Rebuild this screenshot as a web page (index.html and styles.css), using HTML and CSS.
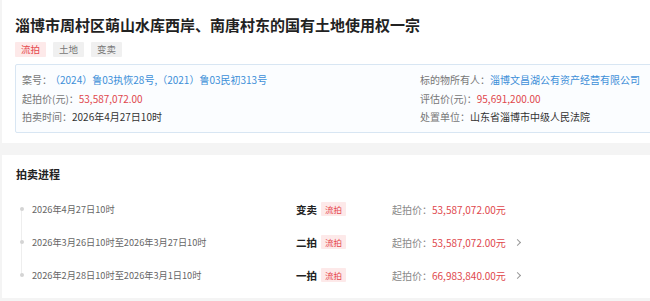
FILE: index.html
```html
<!DOCTYPE html>
<html lang="zh-CN">
<head>
	<meta charset="utf-8">
	<title>拍卖详情</title>
	<link rel="stylesheet" href="styles.css">
</head>
<body>
	<div class="card head-card">
		<h1 class="title">淄博市周村区萌山水库西岸、南唐村东的国有土地使用权一宗</h1>
		<div class="tags">
			<span class="tag tag-red">流拍</span>
			<span class="tag">土地</span>
			<span class="tag">变卖</span>
		</div>
		<div class="info">
			<div class="info-row"><span class="label">案号：</span><span class="link case-no">（2024）鲁03执恢28号,（2021）鲁03民初313号</span></div>
			<div class="info-row"><span class="label">标的物所有人：</span><span class="link">淄博文昌湖公有资产经营有限公司</span></div>
			<div class="info-row"><span class="label">起拍价(元)：</span><span class="price">53,587,072.00</span></div>
			<div class="info-row"><span class="label">评估价(元)：</span><span class="price">95,691,200.00</span></div>
			<div class="info-row"><span class="label">拍卖时间：</span><span class="value">2026年4月27日10时</span></div>
			<div class="info-row"><span class="label">处置单位：</span><span class="value">山东省淄博市中级人民法院</span></div>
		</div>
	</div>

	<div class="card progress-card">
		<h2 class="sub-title">拍卖进程</h2>
		<ul class="timeline">
			<li class="step">
				<span class="dot"></span>
				<span class="date">2026年4月27日10时</span>
				<span class="stage">变卖<span class="mini-tag">流拍</span></span>
				<span class="start">起拍价：<em>53,587,072.00元</em></span>
			</li>
			<li class="step">
				<span class="dot"></span>
				<span class="date">2026年3月26日10时至2026年3月27日10时</span>
				<span class="stage">二拍<span class="mini-tag">流拍</span></span>
				<span class="start">起拍价：<em>53,587,072.00元</em><i class="arrow"></i></span>
			</li>
			<li class="step">
				<span class="dot"></span>
				<span class="date">2026年2月28日10时至2026年3月1日10时</span>
				<span class="stage">一拍<span class="mini-tag">流拍</span></span>
				<span class="start">起拍价：<em>66,983,840.00元</em><i class="arrow"></i></span>
			</li>
		</ul>
	</div>
</body>
</html>
```

FILE: styles.css
```css
*{
	margin: 0;
	padding: 0;
	box-sizing: border-box;
}

ul{
	list-style: none
}

html, body{
	height: 100%;
	overflow: hidden;
}
body{
	background: #f4f4f4;
	font-family: "Noto Sans CJK SC", "Noto Sans", sans-serif;
	color: #333;
}

.card{
	background: #fff;
	margin-left: 2px;
}

/* top card */
.head-card{
	padding: 14px 0 10px 13px;
}
.title{
	font-size: 15px;
	line-height: 22px;
	font-weight: 700;
	color: #222;
	white-space: nowrap;
}
.tags{
	display: flex;
	gap: 7px;
	margin-top: 6px;
}
.tag{
	display: inline-block;
	height: 15px;
	line-height: 15px;
	padding: 0 6px;
	font-size: 9.5px;
	color: #777;
	background: #f0f0f0;
	border-radius: 1px;
}
.tag-red{
	color: #e5484d;
	background: #fde9e9;
}

.info{
	display: grid;
	grid-template-columns: 398px 1fr;
	margin-top: 7px;
	margin-right: -20px;
	padding: 6px 0 5px 6px;
	border: 1px solid #d8e6f3;
	border-radius: 2px;
	background: #fbfdff;
	font-size: 10px;
	line-height: 18.5px;
}
.info-row{
	white-space: nowrap;
}
.label{
	color: #777;
}
.case-no{
	margin-left: 3px;
}
.link{
	color: #3d8fd8;
}
.price{
	color: #e0474c;
}
.value{
	color: #333;
}

/* progress card */
.progress-card{
	margin-top: 12px;
	padding: 10px 0 6px 14px;
}
.sub-title{
	font-size: 11px;
	line-height: 18px;
	font-weight: 700;
	color: #222;
}
.timeline{
	position: relative;
	margin-top: 10px;
}
.timeline::before{
	content: "";
	position: absolute;
	left: 5px;
	top: 16px;
	bottom: 16px;
	width: 1px;
	background: #eee;
}
.step{
	display: grid;
	grid-template-columns: 16px 264px 96px auto;
	align-items: center;
	height: 33px;
	white-space: nowrap;
}
.dot{
	position: relative;
	width: 4px;
	height: 4px;
	margin-left: 4px;
	border-radius: 50%;
	background: #d4d4d4;
}
.date{
	font-size: 9.2px;
	color: #666;
}
.stage{
	display: flex;
	align-items: center;
	font-size: 10.5px;
	font-weight: 700;
	color: #222;
}
.mini-tag{
	display: inline-block;
	height: 14px;
	line-height: 14px;
	margin-left: 4px;
	padding: 0 4px;
	font-size: 8.5px;
	font-weight: 400;
	color: #e5484d;
	background: #fde9e9;
	border-radius: 1px;
}
.start{
	display: flex;
	align-items: center;
	font-size: 10px;
	color: #888;
}
.start em{
	font-style: normal;
	color: #e0474c;
}
.arrow{
	width: 5px;
	height: 5px;
	margin-left: 9px;
	border-top: 1px solid #999;
	border-right: 1px solid #999;
	transform: rotate(45deg);
}
```
